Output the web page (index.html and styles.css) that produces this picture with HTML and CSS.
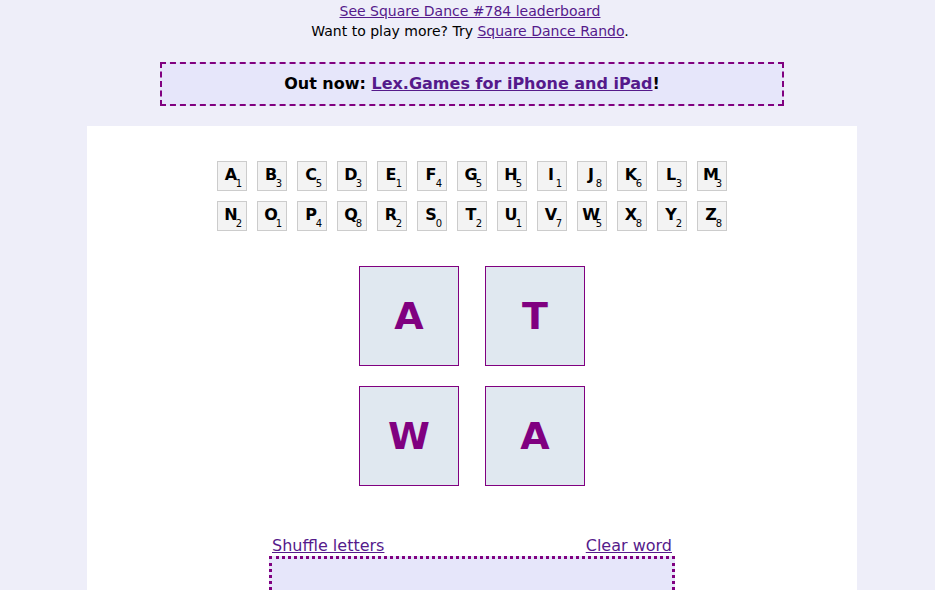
FILE: index.html
```html
<!DOCTYPE html>
<html>
<head>
<meta charset="utf-8">
<link rel="stylesheet" href="styles.css">
</head>
<body>
<div class="top">
  <div class="line"><a href="#">See Square Dance #784 leaderboard</a></div>
  <div class="line">Want to play more? Try <a href="#">Square Dance Rando</a>.</div>
</div>
<div class="banner">Out now: <a href="#">Lex.Games for iPhone and iPad</a>!</div>
<div class="panel">
  <div class="letters">
    <div class="lt">A<span class="pt">1</span></div>
    <div class="lt">B<span class="pt">3</span></div>
    <div class="lt">C<span class="pt">5</span></div>
    <div class="lt">D<span class="pt">3</span></div>
    <div class="lt">E<span class="pt">1</span></div>
    <div class="lt">F<span class="pt">4</span></div>
    <div class="lt">G<span class="pt">5</span></div>
    <div class="lt">H<span class="pt">5</span></div>
    <div class="lt">I<span class="pt">1</span></div>
    <div class="lt">J<span class="pt">8</span></div>
    <div class="lt">K<span class="pt">6</span></div>
    <div class="lt">L<span class="pt">3</span></div>
    <div class="lt">M<span class="pt">3</span></div>
    <div class="lt">N<span class="pt">2</span></div>
    <div class="lt">O<span class="pt">1</span></div>
    <div class="lt">P<span class="pt">4</span></div>
    <div class="lt">Q<span class="pt">8</span></div>
    <div class="lt">R<span class="pt">2</span></div>
    <div class="lt">S<span class="pt">0</span></div>
    <div class="lt">T<span class="pt">2</span></div>
    <div class="lt">U<span class="pt">1</span></div>
    <div class="lt">V<span class="pt">7</span></div>
    <div class="lt">W<span class="pt">5</span></div>
    <div class="lt">X<span class="pt">8</span></div>
    <div class="lt">Y<span class="pt">2</span></div>
    <div class="lt">Z<span class="pt">8</span></div>
  </div>
  <div class="board">
    <div class="sq">A</div>
    <div class="sq">T</div>
    <div class="sq">W</div>
    <div class="sq">A</div>
  </div>
  <div class="actions">
    <a href="#">Shuffle letters</a>
    <a href="#">Clear word</a>
  </div>
  <div class="word"></div>
</div>
</body>
</html>
```
FILE: styles.css
```css
html, body {
  margin: 0;
  padding: 0;
  overflow: hidden;
}
body {
  background: #eeeef9;
  font-family: "DejaVu Sans", sans-serif;
  font-size: 14px;
  color: #000;
  padding-left: 9px;
  height: 590px;
}
a {
  color: #551a8b;
}
.top {
  text-align: center;
  padding-top: 1px;
  padding-right: 4px;
}
.line {
  line-height: 20px;
}
.banner {
  box-sizing: border-box;
  width: 624px;
  height: 44px;
  margin: 21px auto 0;
  border: 2px dashed #800080;
  background: #e6e6fa;
  font-weight: bold;
  font-size: 16px;
  line-height: 40px;
  text-align: center;
}
.panel {
  width: 770px;
  margin: 20px auto 0;
  background: #fff;
  height: 500px;
  padding-top: 35px;
  box-sizing: border-box;
  display: flex;
  flex-direction: column;
  align-items: center;
}
.letters {
  display: grid;
  grid-template-columns: repeat(13, 30px);
  gap: 10px;
}
.lt {
  position: relative;
  box-sizing: border-box;
  width: 30px;
  height: 30px;
  background: #f3f3f3;
  border: 1px solid #cccccc;
  font-weight: bold;
  font-size: 16px;
  display: flex;
  align-items: center;
  justify-content: center;
  padding-bottom: 4px;
  padding-right: 2px;
}
.pt {
  position: absolute;
  right: 4px;
  bottom: 0px;
  font-weight: normal;
  font-size: 10px;
  line-height: 12px;
}
.board {
  margin-top: 35px;
  display: grid;
  grid-template-columns: 100px 100px;
  column-gap: 26px;
  row-gap: 20px;
}
.sq {
  box-sizing: border-box;
  width: 100px;
  height: 100px;
  background: #e0e8f0;
  border: 1px solid #800080;
  color: #800080;
  font-family: "DejaVu Sans", sans-serif;
  font-weight: bold;
  font-size: 38px;
  display: flex;
  align-items: center;
  justify-content: center;
}
.actions {
  margin-top: 50px;
  width: 400px;
  display: flex;
  justify-content: space-between;
  font-size: 16px;
  line-height: 20px;
}
.word {
  box-sizing: border-box;
  width: 406px;
  height: 80px;
  border: 3px dotted #800080;
  background: #e6e6fa;
}
```
